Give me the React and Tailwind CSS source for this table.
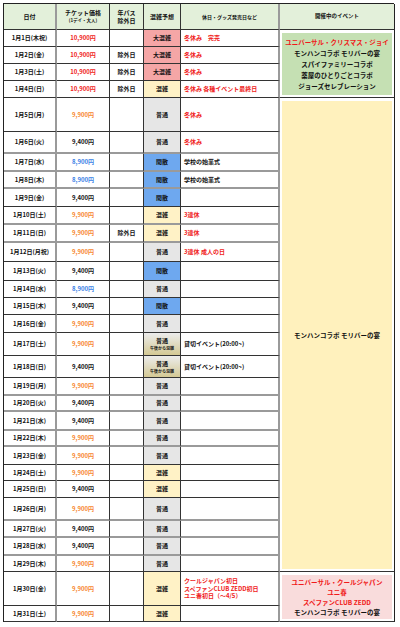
import React from "react";

const RED = "text-[#f01a1a]";
const ORANGE = "text-[#f7862f]";
const BLUE = "text-[#3b82e6]";
const BLACK = "text-[#111]";

const CROWD = {
  大混雑: "bg-[#f5a6a6]",
  混雑: "bg-[#fff2c6]",
  普通: "bg-[#e6e6e6]",
  閑散: "bg-[#6ea8ef]",
  午後: "bg-gradient-to-b from-[#ececec] to-[#d4c994]",
};

const rows = [
  { d: "1月1日(木祝)", p: "10,900円", pc: RED, c: "大混雑", note: "冬休み　完売", nc: RED },
  { d: "1月2日(金)", p: "10,900円", pc: RED, ex: "除外日", c: "大混雑", note: "冬休み", nc: RED },
  { d: "1月3日(土)", p: "10,900円", pc: RED, ex: "除外日", c: "大混雑", note: "冬休み", nc: RED },
  { d: "1月4日(日)", p: "10,900円", pc: RED, ex: "除外日", c: "混雑", note: "冬休み 各種イベント最終日", nc: RED },
  { d: "1月5日(月)", p: "9,900円", pc: ORANGE, c: "普通", note: "冬休み", nc: RED },
  { d: "1月6日(火)", p: "9,400円", pc: BLACK, c: "普通", note: "冬休み", nc: RED, g: true },
  { d: "1月7日(水)", p: "8,900円", pc: BLUE, c: "閑散", note: "学校の始業式", nc: BLACK, g: true },
  { d: "1月8日(木)", p: "8,900円", pc: BLUE, c: "閑散", note: "学校の始業式", nc: BLACK, g: true },
  { d: "1月9日(金)", p: "9,400円", pc: BLACK, c: "閑散" },
  { d: "1月10日(土)", p: "9,900円", pc: ORANGE, c: "混雑", note: "3連休", nc: RED, g: true },
  { d: "1月11日(日)", p: "9,900円", pc: ORANGE, ex: "除外日", c: "混雑", note: "3連休", nc: RED, g: true },
  { d: "1月12日(月祝)", p: "9,900円", pc: ORANGE, c: "普通", note: "3連休 成人の日", nc: RED },
  { d: "1月13日(火)", p: "9,400円", pc: BLACK, c: "閑散" },
  { d: "1月14日(水)", p: "8,900円", pc: BLUE, c: "普通" },
  { d: "1月15日(木)", p: "9,400円", pc: BLACK, c: "閑散" },
  { d: "1月16日(金)", p: "9,900円", pc: ORANGE, c: "普通" },
  { d: "1月17日(土)", p: "9,900円", pc: ORANGE, c: "午後", note: "貸切イベント(20:00~)", nc: BLACK },
  { d: "1月18日(日)", p: "9,400円", pc: BLACK, c: "午後", note: "貸切イベント(20:00~)", nc: BLACK },
  { d: "1月19日(月)", p: "9,900円", pc: ORANGE, c: "普通", g: true },
  { d: "1月20日(火)", p: "9,400円", pc: BLACK, c: "普通", g: true },
  { d: "1月21日(水)", p: "9,400円", pc: BLACK, c: "普通", g: true },
  { d: "1月22日(木)", p: "9,900円", pc: ORANGE, c: "普通", g: true },
  { d: "1月23日(金)", p: "9,900円", pc: ORANGE, c: "普通" },
  { d: "1月24日(土)", p: "9,900円", pc: ORANGE, c: "混雑" },
  { d: "1月25日(日)", p: "9,400円", pc: BLACK, c: "混雑" },
  { d: "1月26日(月)", p: "9,900円", pc: ORANGE, c: "普通", g: true },
  { d: "1月27日(火)", p: "9,400円", pc: BLACK, c: "普通", g: true },
  { d: "1月28日(水)", p: "9,400円", pc: BLACK, c: "普通", g: true },
  { d: "1月29日(木)", p: "9,900円", pc: ORANGE, c: "普通" },
  {
    d: "1月30日(金)", p: "9,900円", pc: ORANGE, c: "混雑", nc: RED,
    lines: ["クールジャパン初日", "スペファンCLUB ZEDD初日", "ユニ春初日（～4/5）"],
  },
  { d: "1月31日(土)", p: "9,900円", pc: ORANGE, c: "混雑" },
];

function EventBlock({ start, span, bg, children }) {
  return (
    <div
      className={`col-start-6 border-r border-b border-r-[#222] border-b-[#333] bg-white pl-[2px] pr-[2px] pt-[3px] pb-[2px] ${start} ${span}`}
    >
      <div className={`flex h-full flex-col items-center justify-center ${bg}`}>{children}</div>
    </div>
  );
}

export default function App() {
  const hb = "flex items-center justify-center border-b border-b-[#333] bg-[#e3f0da] text-center";
  return (
    <div
      className="bg-white p-[3px] font-bold text-[#111]"
      style={{ fontFamily: '"Noto Sans CJK JP", "Noto Sans", sans-serif' }}
    >
      <div className="grid w-[391px] grid-cols-[53px_53px_34px_37px_99px_115px] grid-rows-[26px_17px_17px_17px_17px_34px_22px_18px_17px_18px_18px_18px_19px_19px_17px_17px_18px_23px_22px_18px_16px_19px_16px_18px_16px_17px_23px_17px_18px_16px_34px_16px] border-t border-l border-[#222] text-[6px] leading-none">
        {/* header */}
        <div className={`${hb} border-r-2 border-r-[#9a9a9a]`}>日付</div>
        <div className={`${hb} flex-col gap-[2px] border-r border-r-[#333]`}>
          <span>チケット価格</span>
          <span className="text-[4.5px]">(1デイ・大人)</span>
        </div>
        <div className={`${hb} flex-col gap-[2px] border-r border-r-[#333]`}>
          <span>年パス</span>
          <span>除外日</span>
        </div>
        <div className={`${hb} border-r border-r-[#333]`}>混雑予想</div>
        <div className={`${hb} border-r-2 border-r-[#9a9a9a] text-[5px]`}>休日・グッズ発売日など</div>
        <div className={`${hb} border-r border-r-[#222] text-[5.5px]`}>開催中のイベント</div>

        {rows.map((r, i) => {
          const bb = r.g ? "border-b-2 border-b-[#9a9a9a]" : "border-b border-b-[#333]";
          return (
            <React.Fragment key={r.d}>
              <div className={`flex items-center justify-center border-r-2 border-r-[#9a9a9a] ${bb}`}>{r.d}</div>
              <div className={`flex items-center justify-center border-r border-r-[#333] ${bb} ${r.pc}`}>{r.p}</div>
              <div className={`flex items-center justify-center border-r border-r-[#333] ${bb}`}>{r.ex}</div>
              <div className={`flex flex-col items-center justify-center gap-[2px] border-r border-r-[#333] ${bb} ${CROWD[r.c]}`}>
                {r.c === "午後" ? (
                  <>
                    <span>普通</span>
                    <span className="text-[4px]">午後から混雑</span>
                  </>
                ) : (
                  r.c
                )}
              </div>
              <div className={`flex flex-col justify-center gap-[1.5px] border-r-2 border-r-[#9a9a9a] pl-[3px] ${bb} ${r.nc || ""}`}>
                {r.lines ? r.lines.map((l) => <span key={l}>{l}</span>) : r.note}
              </div>
              {i === 0 && (
                <EventBlock start="row-start-2" span="row-span-4" bg="bg-[#c5e0b3]">
                  <div className="flex flex-col items-center gap-[4.5px] text-[6.5px]">
                    <span className={RED}>ユニバーサル・クリスマス・ジョイ</span>
                    <span>モンハンコラボ モリバーの宴</span>
                    <span>スパイファミリーコラボ</span>
                    <span>薬屋のひとりごとコラボ</span>
                    <span>ジョーズセレブレーション</span>
                  </div>
                </EventBlock>
              )}
              {i === 4 && (
                <EventBlock start="row-start-6" span="row-span-25" bg="bg-[#fff1bd]">
                  <span className="text-[6.5px]">モンハンコラボ モリバーの宴</span>
                </EventBlock>
              )}
              {i === 29 && (
                <EventBlock start="row-start-31" span="row-span-2" bg="bg-[#f9dcdc]">
                  <div className="flex flex-col items-center gap-[3.5px] text-[6.5px]">
                    <span className={RED}>ユニバーサル・クールジャパン</span>
                    <span className={RED}>ユニ春</span>
                    <span className={RED}>スペファンCLUB ZEDD</span>
                    <span>モンハンコラボ モリバーの宴</span>
                  </div>
                </EventBlock>
              )}
            </React.Fragment>
          );
        })}
      </div>
    </div>
  );
}
